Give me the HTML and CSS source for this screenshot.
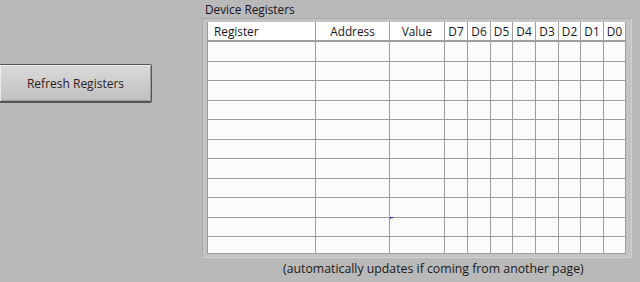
FILE: index.html
```html
<!DOCTYPE html>
<html lang="en">
<head>
  <meta charset="UTF-8">
  <title>Device Registers</title>
  <link rel="stylesheet" href="styles.css">
</head>
<body>
  <div class="side">
    <button class="refresh-btn">Refresh Registers</button>
  </div>

  <div class="main">
    <div class="label">Device Registers</div>
    <div class="panel">
      <div class="grid" id="regGrid">
        <div class="head left">Register</div>
        <div class="head">Address</div>
        <div class="head">Value</div>
        <div class="head">D7</div>
        <div class="head">D6</div>
        <div class="head">D5</div>
        <div class="head">D4</div>
        <div class="head">D3</div>
        <div class="head">D2</div>
        <div class="head">D1</div>
        <div class="head">D0</div>
        <span class="cursor-mark"></span>
      </div>
    </div>
    <div class="caption">(automatically updates if coming from another page)</div>
  </div>

  <script>
    // empty rows, 11 columns each
    var grid = document.getElementById('regGrid');
    for (var i = 0; i < 11 * 11; i++) {
      var cell = document.createElement('div');
      cell.className = 'cell';
      grid.appendChild(cell);
    }
  </script>
</body>
</html>
```

FILE: styles.css
```css
body {
  margin: 0;
  width: 640px;
  height: 282px;
  overflow: hidden;
  background: #b9b9b9;
  font-family: 'Open Sans', 'Liberation Sans', sans-serif;
  font-size: 11.8px;
  color: #15151f;
  display: flex;
}

.side {
  width: 202px;
  flex-shrink: 0;
}

.refresh-btn {
  display: block;
  margin-top: 64px;
  width: 152px;
  height: 39px;
  padding: 0;
  border: 1px solid #555555;
  border-bottom-width: 2px;
  border-left: none;
  border-radius: 0 2px 2px 0;
  background: linear-gradient(#dadada 0%, #cecece 45%, #c0c0c0 100%);
  box-shadow: inset 1px 1px 0 #ececec, inset -1px -1px 0 #9c9c9c;
  font-family: 'Open Sans', 'Liberation Sans', sans-serif;
  font-size: 12px;
  color: #2e2020;
}

.main {
  padding-top: 1px;
}

.label {
  height: 17px;
  line-height: 17px;
  padding-left: 3px;
}

.panel {
  width: 419px;
  height: 232px;
  padding: 3px 5px 3px 4px;
  background: #c3c3c3;
  border: 1px solid;
  border-color: #aaaaaa #d0d0d0 #d0d0d0 #aaaaaa;
  overflow: hidden;
}

.grid {
  position: relative;
  display: grid;
  grid-template-columns: 107px 73px 54px 22px 22px 21px 22px 22px 21px 22px 21px;
  grid-template-rows: 19px repeat(5, 19px 18px) 16px;
  gap: 1px;
  padding: 0 1px 1px;
  width: 417px;
  background: #9d9d9d;
}

.head {
  background: #ffffff;
  border-bottom: 1px solid #9d9d9d;
  text-align: center;
  line-height: 18px;
  white-space: nowrap;
}

.head.left {
  text-align: left;
  padding-left: 6px;
}

.cell {
  background: #fbfbfb;
}

.cursor-mark {
  position: absolute;
  left: 183px;
  top: 195px;
  width: 3px;
  height: 2px;
  background: #2430c8;
  clip-path: polygon(0 0, 100% 0, 100% 50%, 34% 50%, 34% 100%, 0 100%);
}

.caption {
  padding-left: 81px;
  line-height: 22px;
  font-size: 12.3px;
  color: #1a1a1a;
}
```
